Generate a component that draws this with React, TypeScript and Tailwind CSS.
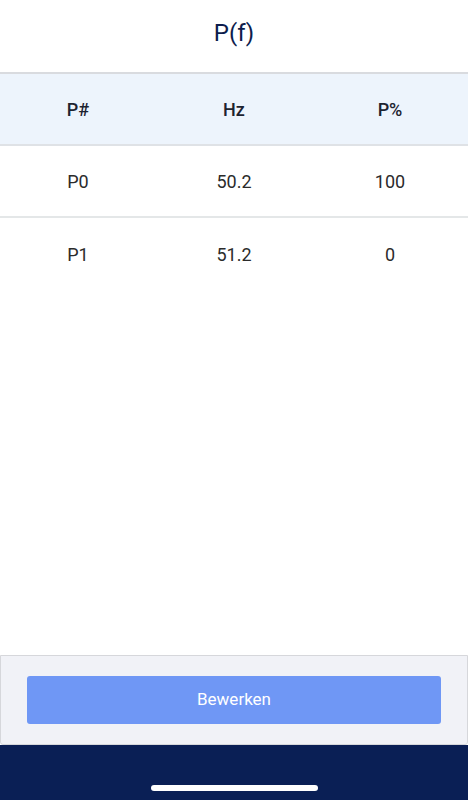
export default function App() {
  const rows = [
    { p: 'P0', hz: '50.2', pct: '100' },
    { p: 'P1', hz: '51.2', pct: '0' },
  ];

  return (
    <div className="h-[800px] w-[468px] flex flex-col bg-white font-['Roboto',sans-serif] overflow-hidden">
      <div className="h-[74px] shrink-0 flex items-center justify-center pb-[6px] border-b-2 border-[#d9dbdf]">
        <h1 className="text-[24px] text-[#0d1d4d]">P(f)</h1>
      </div>

      <div className="h-[72px] shrink-0 grid grid-cols-3 items-center bg-[#edf4fc] border-b-2 border-[#dfe2e6] text-[18px] font-medium text-[#1d2330]">
        <div className="text-center">P#</div>
        <div className="text-center">Hz</div>
        <div className="text-center">P%</div>
      </div>

      {rows.map((row, i) => (
        <div
          key={row.p}
          className={`h-[72px] shrink-0 grid grid-cols-3 items-center text-[18px] text-[#2b2b2b] ${i === 0 ? 'border-b-2 border-[#e4e7e8]' : ''}`}
        >
          <div className="text-center">{row.p}</div>
          <div className="text-center">{row.hz}</div>
          <div className="text-center">{row.pct}</div>
        </div>
      ))}

      <div className="flex-1" />

      <div className="h-[90px] shrink-0 bg-[#f1f2f7] border border-[#d6d7db] rounded-b-[3px] px-[26px] pt-[20px]">
        <button className="w-full h-[48px] bg-[#6f97f5] rounded-[3px] text-white text-[17px]">Bewerken</button>
      </div>

      <div className="h-[55px] shrink-0 bg-[#0a1f55] flex items-end justify-center pb-[9px]">
        <div className="w-[167px] h-[6px] rounded-full bg-white" />
      </div>
    </div>
  );
}
